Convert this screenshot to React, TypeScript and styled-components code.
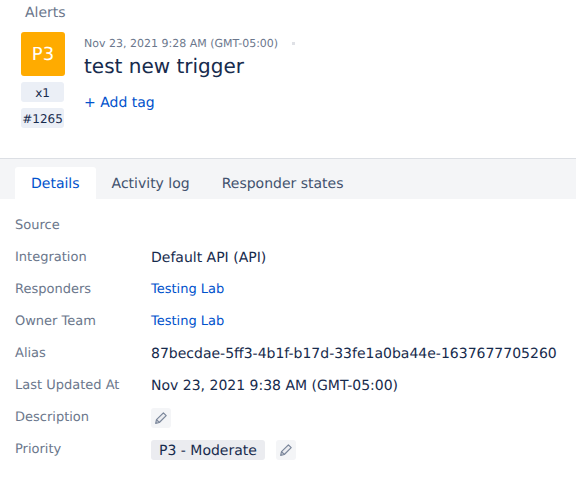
import { createGlobalStyle } from "styled-components";
import styled from "styled-components";

const Global = createGlobalStyle`
  html, body {
    margin: 0;
    padding: 0;
    background: #fff;
    font-family: "DejaVu Sans", sans-serif;
    overflow: hidden;
    text-rendering: geometricPrecision;
  }
`;

const Page = styled.div`
  width: 576px;
  height: 487px;
  display: flex;
  flex-direction: column;
`;

const Header = styled.header`
  height: 159px;
  box-sizing: border-box;
  padding: 4px 0 0 21px;
  border-bottom: 1px solid #dcdfe4;
`;

const Crumb = styled.div`
  font-size: 14px;
  line-height: 18px;
  color: #6b778c;
  margin-left: 4px;
`;

const Summary = styled.div`
  display: flex;
  gap: 19px;
  margin-top: 10px;
`;

const Badges = styled.div`
  display: flex;
  flex-direction: column;
  width: 44px;
`;

const PriorityBox = styled.div`
  width: 44px;
  height: 44px;
  background: #ffab00;
  border-radius: 3px;
  color: #fff;
  font-size: 18px;
  display: flex;
  align-items: center;
  justify-content: center;
`;

const Chip = styled.div`
  width: 43px;
  height: 20px;
  margin-top: 6px;
  padding-top: 1px;
  box-sizing: border-box;
  background: #ebeff6;
  border-radius: 3px;
  color: #172b4d;
  font-size: 12px;
  display: flex;
  align-items: center;
  justify-content: center;
`;

const Info = styled.div`
  display: flex;
  flex-direction: column;
  align-items: flex-start;
`;

const MetaRow = styled.div`
  display: flex;
  align-items: center;
  gap: 14px;
  margin-top: 3px;
  height: 16px;
  font-size: 11px;
  color: #6b778c;
`;

const Dot = styled.span`
  width: 3px;
  height: 3px;
  background: #dfe1e6;
`;

const Title = styled.h1`
  margin: 2px 0 0;
  font-size: 20px;
  font-weight: 400;
  line-height: 26px;
  color: #172b4d;
`;

const AddTag = styled.a`
  margin-top: 15px;
  font-size: 14px;
  line-height: 18px;
  color: #0052cc;
`;

const TabBar = styled.nav`
  height: 40px;
  box-sizing: border-box;
  background: #f4f5f7;
  padding: 8px 0 0 15px;
  display: flex;
`;

const Tab = styled.div<{ $active?: boolean }>`
  height: 32px;
  box-sizing: border-box;
  padding: 1px 16px 0;
  font-size: 14px;
  line-height: 32px;
  color: ${({ $active }) => ($active ? "#0052cc" : "#42526e")};
  background: ${({ $active }) => ($active ? "#fff" : "transparent")};
  border-radius: 3px 3px 0 0;
`;

const Details = styled.div`
  display: grid;
  grid-template-columns: 136px 1fr;
  grid-auto-rows: 32px;
  padding: 11px 0 0 15px;
`;

const Label = styled.div`
  font-size: 13px;
  line-height: 32px;
  color: #6b778c;
`;

const Value = styled.div<{ $link?: boolean }>`
  display: flex;
  align-items: center;
  gap: 11px;
  height: 32px;
  box-sizing: border-box;
  padding-bottom: ${({ $link }) => ($link ? "2px" : "0")};
  font-size: ${({ $link }) => ($link ? "13px" : "14px")};
  color: ${({ $link }) => ($link ? "#0052cc" : "#172b4d")};
  white-space: nowrap;
`;

const Tag = styled.span`
  height: 20px;
  padding: 0 8px;
  background: #ebecf0;
  border-radius: 3px;
  line-height: 22px;
`;

const EditButton = styled.span`
  width: 20px;
  height: 20px;
  background: #f4f5f7;
  border-radius: 3px;
  display: flex;
  align-items: center;
  justify-content: center;
`;

const Pencil = () => (
  <svg width="14" height="14" viewBox="0 0 14 14" fill="none" stroke="#7a869a" strokeWidth="1.2" strokeLinejoin="round">
    <path d="M9.4 1.8l2.8 2.8-6.9 6.9-3.6.8.8-3.6z" fill="#ebecf0" />
    <path d="M2.5 8.7l2.8 2.8" />
  </svg>
);

export default function App() {
  return (
    <Page>
      <Global />
      <Header>
        <Crumb>Alerts</Crumb>
        <Summary>
          <Badges>
            <PriorityBox>P3</PriorityBox>
            <Chip>x1</Chip>
            <Chip>#1265</Chip>
          </Badges>
          <Info>
            <MetaRow>
              Nov 23, 2021 9:28 AM (GMT-05:00)
              <Dot />
            </MetaRow>
            <Title>test new trigger</Title>
            <AddTag>+ Add tag</AddTag>
          </Info>
        </Summary>
      </Header>
      <TabBar>
        <Tab $active>Details</Tab>
        <Tab>Activity log</Tab>
        <Tab>Responder states</Tab>
      </TabBar>
      <Details>
        <Label>Source</Label>
        <Value />
        <Label>Integration</Label>
        <Value>Default API (API)</Value>
        <Label>Responders</Label>
        <Value $link>Testing Lab</Value>
        <Label>Owner Team</Label>
        <Value $link>Testing Lab</Value>
        <Label>Alias</Label>
        <Value>87becdae-5ff3-4b1f-b17d-33fe1a0ba44e-1637677705260</Value>
        <Label>Last Updated At</Label>
        <Value>Nov 23, 2021 9:38 AM (GMT-05:00)</Value>
        <Label>Description</Label>
        <Value>
          <EditButton>
            <Pencil />
          </EditButton>
        </Value>
        <Label>Priority</Label>
        <Value>
          <Tag>P3 - Moderate</Tag>
          <EditButton>
            <Pencil />
          </EditButton>
        </Value>
      </Details>
    </Page>
  );
}
